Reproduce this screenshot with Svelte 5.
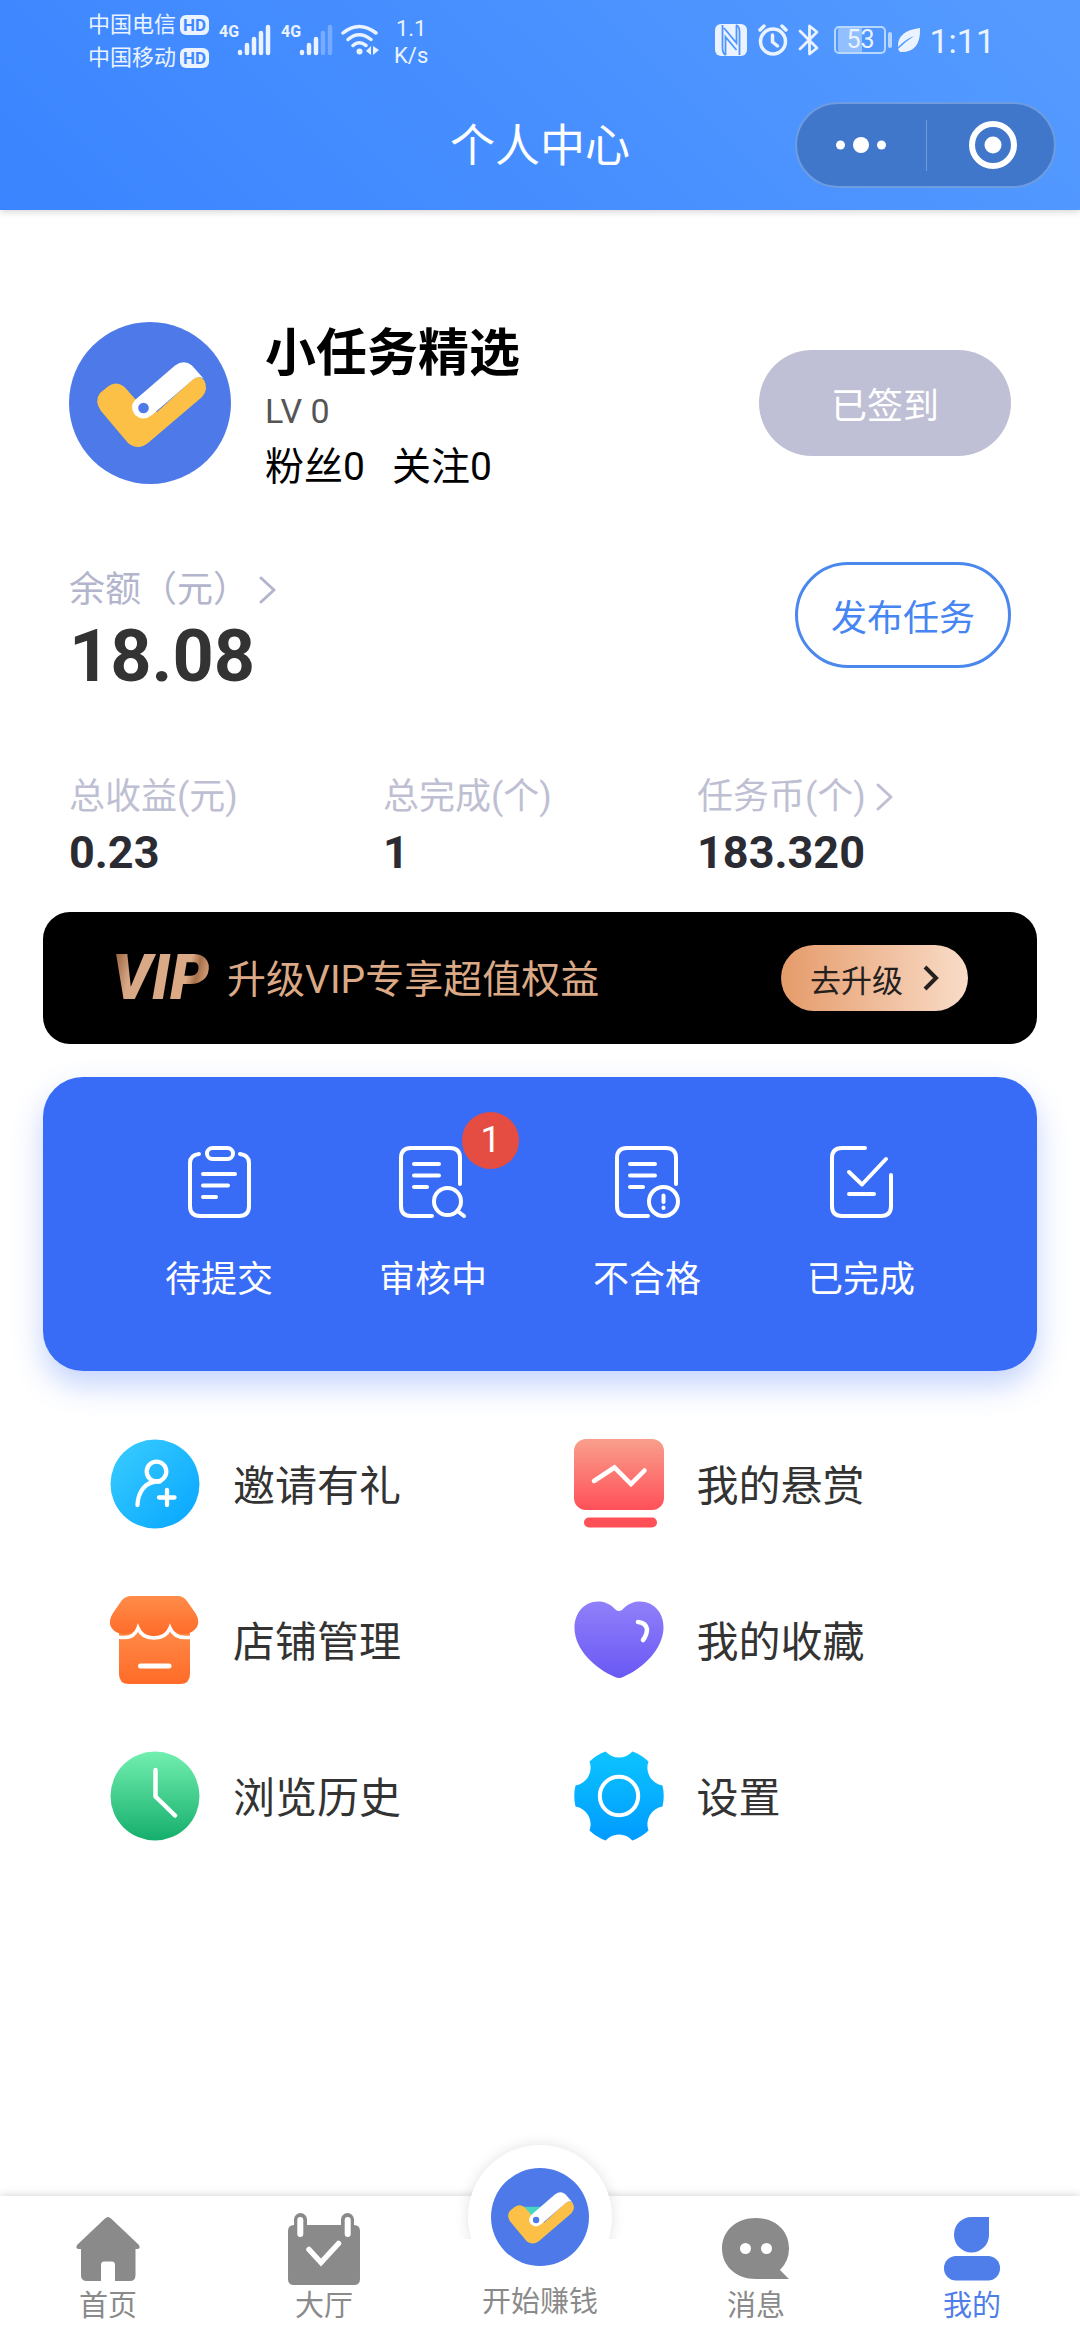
<script>
  const stats = [
    { label: '总收益(元)', value: '0.23' },
    { label: '总完成(个)', value: '1' },
    { label: '任务币(个)', value: '183.320', more: true }
  ];
  const tasks = [
    { id: 'submit', label: '待提交' },
    { id: 'review', label: '审核中', badge: 1 },
    { id: 'failed', label: '不合格' },
    { id: 'done', label: '已完成' }
  ];
  const menu = [
    { id: 'invite', label: '邀请有礼' },
    { id: 'reward', label: '我的悬赏' },
    { id: 'shop', label: '店铺管理' },
    { id: 'heart', label: '我的收藏' },
    { id: 'history', label: '浏览历史' },
    { id: 'settings', label: '设置' }
  ];
  const tabs = [
    { id: 'home', label: '首页' },
    { id: 'hall', label: '大厅' },
    { id: 'earn', label: '开始赚钱' },
    { id: 'message', label: '消息' },
    { id: 'me', label: '我的' }
  ];
  let active = $state('me');
</script>

{#snippet logo(teal)}
  <svg class="logo" viewBox="0 0 162 162" aria-hidden="true">
    <circle cx="81" cy="81" r="81" fill="#4e79e8" />
    {#if teal}<path d="M50 64H90L68 84Z" fill="#46d6c2" />{/if}
    <path d="M31 71L39 64.500Q47.500 58 56 65.500L68 79L88 90L123 58Q130 52 135 58Q140 67 133 75L79 121Q69 129 59 121L32 89Q25 79 31 71Z" fill="#fbc045" />
    <path d="M66 78L106 43.500Q115 37 123 43.500L134.500 56.500Q129 53 124 57.500L83 93Q74 100 66 93Q60 85 66 78Z" fill="#fff" />
    <circle cx="74.500" cy="86" r="5.300" fill="#4e79e8" />
  </svg>
{/snippet}

{#snippet chevron()}
  <svg class="chevron" viewBox="0 0 18 30" aria-hidden="true"><path d="M2 3L15 15L2 27" fill="none" stroke="currentColor" stroke-width="3" stroke-linecap="round" stroke-linejoin="round" /></svg>
{/snippet}

<div class="page">
  <header>
    <div class="status">
      <div class="carriers">
        <div>中国电信<b>HD</b></div>
        <div>中国移动<b>HD</b></div>
      </div>
      <div class="signal"><i>4G</i>
        <svg width="34" height="32" viewBox="0 0 34 32" fill="none" stroke="#eaf3ff" stroke-width="4.500" stroke-linecap="round"><path d="M3 28v1M10 21v8M17 15v14M24 9v20M31 3v26" /></svg>
      </div>
      <div class="signal second"><i>4G</i>
        <svg width="34" height="32" viewBox="0 0 34 32" fill="none" stroke="#eaf3ff" stroke-width="4.500" stroke-linecap="round"><path d="M3 28v1M10 21v8M17 15v14" /><path opacity=".3" d="M24 9v20M31 3v26" /></svg>
      </div>
      <svg class="wifi" width="38" height="32" viewBox="0 0 38 32" fill="none" stroke="#eaf3ff" stroke-width="3.500" stroke-linecap="round">
        <path d="M2 9Q18 -4 35 9M7 15.500Q18 6 30 15.500M12 21.500Q18 16 25 21.500" />
        <circle cx="18.500" cy="27.500" r="3" fill="#eaf3ff" stroke="none" />
        <path d="M30 22v9l-5-4zM32 22v9l6-5z" fill="#eaf3ff" stroke="none" />
      </svg>
      <div class="speed">1.1<br />K/s</div>
      <div class="right">
        <svg class="nfc" width="32" height="32" viewBox="0 0 32 32"><rect width="32" height="32" rx="6" fill="#eaf3ff" /><path d="M7.500 1V24Q7.500 30 11 31M10.500 31V13L21.500 26M24.500 31V8Q24.500 2 21 1M21.500 1V19L9 4" fill="none" stroke="#5096fe" stroke-width="1.800" /></svg>
        <svg class="alarm" width="30" height="32" viewBox="0 0 30 32" fill="none" stroke="#eaf3ff" stroke-width="3.500" stroke-linecap="round"><circle cx="15" cy="17.500" r="12.500" /><path d="M14.500 11v7l5 4M2 6l4-4M28 6l-4-4" /></svg>
        <svg class="bt" width="22" height="32" viewBox="0 0 22 32" fill="none" stroke="#eaf3ff" stroke-width="2.800" stroke-linejoin="round" stroke-linecap="round"><path d="M2 7L19 24L11.500 30V2L19 8L2 25" /></svg>
        <span class="battery">53</span>
        <svg class="leaf" width="24" height="26" viewBox="0 0 24 26"><path d="M23 1Q0 4 1 20Q9 12 17 9Q8 15 1 22L3 25Q24 26 23 1Z" fill="#eaf3ff" /></svg>
        <time>1:11</time>
      </div>
    </div>
    <div class="titlebar">
      <h1>个人中心</h1>
      <div class="capsule">
        <button aria-label="更多"><svg width="52" height="20" viewBox="0 0 52 20" fill="#fff"><circle cx="5.500" cy="10" r="4.500" /><circle cx="26" cy="10" r="8" /><circle cx="46.500" cy="10" r="4.500" /></svg></button>
        <button aria-label="关闭"><svg width="48" height="48" viewBox="0 0 48 48" fill="#fff"><circle cx="24" cy="24" r="21" fill="none" stroke="#fff" stroke-width="6" /><circle cx="24" cy="24" r="8.500" /></svg></button>
      </div>
    </div>
  </header>

  <main>
    <section class="profile">
      <div class="avatar">{@render logo(false)}</div>
      <div class="who">
        <h2>小任务精选</h2>
        <p class="level">LV 0</p>
        <p class="follow"><span>粉丝0</span><span>关注0</span></p>
      </div>
      <button class="signed">已签到</button>
    </section>

    <section class="balance">
      <div>
        <a href="#balance">余额（元）{@render chevron()}</a>
        <strong>18.08</strong>
      </div>
      <button class="publish">发布任务</button>
    </section>

    <dl class="stats">
      {#each stats as s}
        <div>
          <dt>{s.label}{#if s.more}{@render chevron()}{/if}</dt>
          <dd>{s.value}</dd>
        </div>
      {/each}
    </dl>

    <section class="vip">
      <em>VIP</em>
      <span>升级VIP专享超值权益</span>
      <button>去升级<svg width="16" height="26" viewBox="0 0 16 26" fill="none" stroke="#24201e" stroke-width="4"><path d="M2 2L13 13L2 24" /></svg></button>
    </section>

    <section class="tasks">
      {#each tasks as t}
        <button>
          <span class="ticon">
            <svg viewBox="0 0 72 72" fill="none" stroke="#fff" stroke-width="4" stroke-linecap="round" stroke-linejoin="round" aria-hidden="true">
              {#if t.id === 'submit'}
                <path d="M16 8Q7 9 7 17V60Q7 70 17 70H56Q66 70 66 60V17Q66 9 57 8" />
                <rect x="24" y="2" width="26" height="11" rx="5.500" />
                <path d="M20 28H52M20 39.500H45M20 51H33" />
              {:else if t.id === 'review'}
                <path d="M63 38V12Q63 2 53 2H14Q4 2 4 12V60Q4 70 14 70H35" />
                <path d="M17 18H42M17 29.500H42M17 41H30" />
                <circle cx="50.500" cy="55.500" r="13.500" /><path d="M60.500 65L67 70" />
              {:else if t.id === 'failed'}
                <path d="M65 38V12Q65 2 55 2H16Q6 2 6 12V60Q6 70 16 70H37" />
                <path d="M19 18H44M19 29.500H44M19 41H32" />
                <circle cx="52.500" cy="55.500" r="14.500" /><path d="M52.500 49.500V56M52.500 61.500V62" />
              {:else}
                <path d="M40 2H17Q7 2 7 12V60Q7 70 17 70H56Q66 70 66 60V29" />
                <path d="M24 26L37 38.500L61 13M24 48H49" />
              {/if}
            </svg>
            {#if t.badge}<span class="badge">{t.badge}</span>{/if}
          </span>
          {t.label}
        </button>
      {/each}
    </section>

    <nav class="menu">
      {#each menu as m}
        <a href={'#' + m.id}>
          <svg viewBox="0 0 90 90" fill="none" stroke-linecap="round" stroke-linejoin="round" aria-hidden="true">
            {#if m.id === 'invite'}
              <defs><linearGradient id="gi" x1="0" y1="0" x2="1" y2="1"><stop offset=".1" stop-color="#35c9ff" /><stop offset=".9" stop-color="#0ba9ff" /></linearGradient></defs>
              <circle cx="45" cy="45" r="44.500" fill="url(#gi)" />
              <g stroke="#fff" stroke-width="4.300"><circle cx="46.500" cy="32.500" r="9.800" /><path d="M27.500 66C28 53 35 43.500 46 42.500H50M49 58.500H64.500M57 51V66" /></g>
            {:else if m.id === 'reward'}
              <defs><linearGradient id="gr" x1="0" y1="0" x2="0" y2="1"><stop stop-color="#f99f8c" /><stop offset="1" stop-color="#ff5058" /></linearGradient></defs>
              <rect y="0" width="90" height="71" rx="12" fill="url(#gr)" />
              <rect x="10" y="78.500" width="73" height="10" rx="5" fill="#ff5058" />
              <path d="M20 42L40.500 28.500L57 45L70.500 31.500" stroke="#fff" stroke-width="4.500" stroke-linejoin="miter" />
            {:else if m.id === 'shop'}
              <defs><linearGradient id="gs" x1="0" y1="0" x2="0" y2="1"><stop stop-color="#ff8c4a" /><stop offset="1" stop-color="#ff6b28" /></linearGradient></defs>
              <path d="M9 30H80V79Q80 89 70 89H19Q9 89 9 79Z" fill="url(#gs)" />
              <path d="M21 1H68Q73 1 77 6L86 19Q90 26 87 32Q82 39 74 39Q64 39 60 31Q56 41 44 41Q32 41 28 31Q24 39 14 39Q5 39 1 32Q-2 26 3 18L12 5Q16 1 21 1Z" fill="url(#gs)" />
              <path d="M8 42Q24 45 28 33Q32 43 44 43Q56 43 60 33Q65 45 82 42" stroke="#fff" stroke-width="3.500" stroke-linecap="butt" stroke-linejoin="miter" />
              <path d="M30.500 71H59" stroke="#fff" stroke-width="5" />
            {:else if m.id === 'heart'}
              <defs><linearGradient id="gh" x1="0" y1="0" x2="0" y2="1"><stop stop-color="#9080fa" /><stop offset="1" stop-color="#6a58f4" /></linearGradient></defs>
              <path d="M42 15Q45 17 48 15C54 8 61 6.500 66 6.500C80 6.500 90 18 89.500 33C89 55 68 74 49 82Q45 84 41 82C22 74 .5 55 .5 33C.5 18 10 6.500 24 6.500C29 6.500 36 8 42 15Z" fill="url(#gh)" />
              <path d="M64 27Q72 28 73 34Q73 40 69 45" stroke="#fff" stroke-width="4.500" />
            {:else if m.id === 'history'}
              <defs><linearGradient id="gc" x1="0" y1="0" x2="0" y2="1"><stop stop-color="#72efaf" /><stop offset="1" stop-color="#15ae6c" /></linearGradient></defs>
              <circle cx="45" cy="45" r="44.500" fill="url(#gc)" />
              <path d="M45.500 19V45.500L65 64.500" stroke="#fff" stroke-width="4.500" />
            {:else}
              <defs><linearGradient id="gg" x1="0" y1="0" x2="0" y2="1"><stop stop-color="#0cc4ff" /><stop offset="1" stop-color="#009bff" /></linearGradient></defs>
              <path d="M31.600 .5A18 18 0 0 0 58.400 .5A46 46 0 0 1 74.500 10.500A18 18 0 0 0 88.500 34.500A46 46 0 0 1 88.500 55.500A18 18 0 0 0 74.500 79.500A46 46 0 0 1 58.400 89.500A18 18 0 0 0 31.600 89.500A46 46 0 0 1 15.500 79.500A18 18 0 0 0 1.500 55.500A46 46 0 0 1 1.500 34.500A18 18 0 0 0 15.500 10.500A46 46 0 0 1 31.600 .5Z" fill="url(#gg)" />
              <circle cx="45" cy="45" r="19.200" stroke="#fff" stroke-width="4" />
            {/if}
          </svg>
          <span>{m.label}</span>
        </a>
      {/each}
    </nav>
  </main>

  <nav class="tabbar">
    {#each tabs as t}
      <button class:active={active === t.id} class:center={t.id === 'earn'} onclick={() => (active = t.id)}>
        {#if t.id === 'earn'}
          <span class="bump">{@render logo(true)}</span>
        {:else}
          <svg class="tab-icon" viewBox="0 0 72 72" fill="currentColor" aria-hidden="true">
            {#if t.id === 'home'}
              <path d="M33 5.500Q36 2.500 39 5.500L67 32Q69 36 65 36H63.500V62Q63.500 68 58 68H43V52Q43 48.500 40 48.500H32Q29 48.500 29 52V68H15Q9 68 9 62V36H7Q3 36 5 32Z" />
            {:else if t.id === 'hall'}
              <path d="M6 12V6.500a6.500 6.500 0 0 1 13 0V12H53V6.500a6.500 6.500 0 0 1 13 0V12Q72 12 72 18V66Q72 72 66 72H6Q0 72 0 66V18Q0 12 6 12Z" />
              <path d="M12.300 7V21M59.700 7V21" stroke="#fff" stroke-width="6" stroke-linecap="round" />
              <path d="M21 36.500L33 49.500L50.500 30.500" fill="none" stroke="#fff" stroke-width="5.500" stroke-linecap="round" />
            {:else if t.id === 'message'}
              <path d="M36 66C16 66 2 53 2 35.500S16 5 36 5S69 18 69 35.500Q69 48 60 57L69 66Z" />
              <circle cx="25.500" cy="35.500" r="5.500" fill="#fff" /><circle cx="46.500" cy="35.500" r="5.500" fill="#fff" />
            {:else}
              <path d="M53 4V22A17.500 17.500 0 0 1 18 22A17.500 17.500 0 0 1 36 4Z" />
              <rect x="8" y="43" width="56" height="24.500" rx="12" />
            {/if}
          </svg>
        {/if}
        <span class="tab-label">{t.label}</span>
      </button>
    {/each}
  </nav>
</div>

<style>
  :global(body) { margin: 0; background: #fff; }
  .page {
    min-height: 100vh;
    display: flex;
    flex-direction: column;
    font-family: Roboto, "Noto Sans CJK SC", sans-serif;
    color: #333;
  }
  .page :is(h1, h2, p, dl, dd) { margin: 0; font-weight: 400; }
  button { border: 0; padding: 0; background: none; font: inherit; color: inherit; cursor: pointer; }
  a { color: inherit; text-decoration: none; }
  svg { display: block; flex: none; }

  header {
    height: 210px;
    background: linear-gradient(45deg, #3a84ff, #559bff);
    box-shadow: 0 1px 8px rgba(0, 0, 0, .2);
    color: #eaf3ff;
  }
  .status { height: 80px; display: flex; align-items: center; padding: 0 85px 0 88px; }
  .carriers { font-size: 22px; line-height: 33px; padding-top: 2px; }
  .carriers div { display: flex; align-items: center; gap: 4px; }
  .carriers b {
    width: 29px; height: 20px; border-radius: 6px; background: #eaf3ff; color: #3f88ff;
    font-size: 17px; line-height: 20px; text-align: center;
  }
  .signal { display: flex; align-items: flex-start; margin-left: 10px; }
  .signal i { font: 700 16px/16px Roboto, sans-serif; width: 18px; }
  .wifi { margin-left: 8px; }
  .speed { font-size: 22px; line-height: 27px; text-align: center; margin-left: 15px; padding-top: 4px; }
  .right { margin-left: auto; display: flex; align-items: center; }
  .alarm { margin-left: 11px; }
  .bt { margin-left: 10px; }
  .battery {
    position: relative; box-sizing: border-box; width: 52px; height: 28px; margin: 0 11px 0 14px;
    border: 2px solid #b9d6ff; border-radius: 5px; font-size: 25px; line-height: 24px; text-align: center;
    background: linear-gradient(90deg, #92bfff 54%, transparent 54%) content-box; padding: 0 2px;
  }
  .battery::after {
    content: ""; position: absolute; right: -8px; top: 4px; width: 4px; height: 16px; border-radius: 2px; background: #b9d6ff;
  }
  time { font-size: 34px; line-height: 40px; margin-left: 8px; padding-top: 2px; }

  .titlebar { height: 130px; display: grid; grid-template-columns: 1fr auto 1fr; align-items: center; padding: 0 24px; }
  h1 { grid-column: 2; font-size: 45px; line-height: 60px; padding-top: 3px; color: #fff; }
  .page h1 { padding-top: 3px; }
  .capsule {
    justify-self: end; box-sizing: border-box; width: 261px; height: 86px; border: 2px solid #6e9ce0; border-radius: 43px;
    background: #4077ca; display: grid; grid-template-columns: 1fr 1fr; align-items: center;
  }
  .capsule button { height: 51px; display: grid; place-items: center; }
  .capsule button + button { border-left: 1px solid #6f9bdd; padding-left: 6px; }

  main { flex: 1; padding: 102px 43px 0; }
  .profile { display: flex; align-items: center; padding: 0 26px; }
  .avatar { width: 162px; height: 162px; }
  .logo { width: 100%; height: 100%; }
  .who { margin-left: 34px; }
  .page h2 { font-size: 51px; line-height: 80px; padding-top: 2px; font-weight: 700; color: #000; }
  .level { font-size: 34px; line-height: 34px; color: #555; }
  .follow { display: flex; gap: 27px; font-size: 39px; line-height: 54px; padding-top: 12px; color: #000; }
  .signed { margin-left: auto; width: 252px; height: 106px; border-radius: 53px; background: #bfbfd5; color: #fff; font-size: 36px; }

  .balance { display: flex; justify-content: space-between; align-items: flex-start; margin-top: 68px; padding: 0 26px; }
  .balance a { display: flex; align-items: center; font-size: 36px; line-height: 56px; color: #b3b5cc; }
  .balance a .chevron { margin-left: 10px; }
  .balance strong { display: block; font-size: 72px; line-height: 78px; font-weight: 700; }
  .chevron { width: 18px; height: 30px; }
  .publish { box-sizing: border-box; width: 216px; height: 106px; border: 3px solid #4b88ee; border-radius: 53px; color: #4685f2; font-size: 36px; }

  .stats { display: grid; grid-template-columns: repeat(3, 1fr); padding: 0 26px; }
  .page .stats { margin-top: 76px; }
  .stats dt { display: flex; align-items: center; font-size: 36px; line-height: 50px; color: #bfbfd3; }
  .stats .chevron { margin-left: 10px; }
  .page dd { font-size: 45px; line-height: 62px; font-weight: 700; color: #2a2b33; }

  .vip { height: 132px; margin-top: 28px; border-radius: 27px; background: #000; display: flex; align-items: center; padding: 0 69px; }
  .vip em {
    font-size: 62px; line-height: 66px; font-weight: 900; padding-right: 4px;
    background: linear-gradient(105deg, #96603c 4%, #d9a987 22%, #dba984 70%, #a8714b 78%, #dba984 90%);
    background-clip: text; color: transparent;
  }
  .vip span { margin-left: 14px; padding-top: 4px; font-size: 39px; line-height: 60px; color: #dba985; }
  .vip button {
    margin-left: auto; width: 187px; height: 66px; border-radius: 33px; background: linear-gradient(90deg, #e59b6a, #f9dcc8);
    color: #24201e; font-size: 31px; display: flex; align-items: center; justify-content: center; gap: 20px;
  }

  .tasks {
    display: grid; grid-template-columns: repeat(4, 1fr); margin-top: 33px; padding: 69px 69px 67px;
    border-radius: 40px; background: #386cf6; box-shadow: 0 14px 30px rgba(56, 108, 246, .3); color: #fff;
  }
  .tasks button { display: flex; flex-direction: column; align-items: center; gap: 38px; font-size: 36px; line-height: 48px; }
  .ticon { position: relative; width: 72px; height: 72px; }
  .badge {
    position: absolute; left: 65px; top: -34px; width: 57px; height: 57px; border-radius: 50%;
    background: #e54d42; font-size: 36px; line-height: 57px; text-align: center;
  }

  .menu { display: grid; grid-template-columns: 1fr 1fr; margin-top: 35px; padding-left: 67px; }
  .menu a { height: 156px; display: flex; align-items: center; gap: 33px; font-size: 42px; line-height: 60px; }
  .menu span { padding-top: 5px; }
  .menu svg { width: 90px; height: 90px; }

  .tabbar {
    display: grid; grid-template-columns: repeat(5, 1fr); height: 144px; background: #fff;
    box-shadow: 0 -1px 8px rgba(0, 0, 0, .16); color: #8a8a8a;
  }
  .tabbar button { position: relative; display: flex; flex-direction: column; align-items: center; padding-top: 17px; }
  .tab-icon { width: 72px; height: 72px; }
  .tab-label { font-size: 29px; line-height: 42px; position: relative; }
  .tabbar .active { color: #4f7de9; }
  .tabbar .center { justify-content: flex-end; padding: 0 0 17px; }
  .bump {
    position: absolute; left: 50%; top: -51px; margin-left: -72px; box-sizing: border-box; width: 144px; height: 144px; padding: 23px;
    border-radius: 50%; background: #fff;
  }
  .bump::before {
    content: ""; position: absolute; inset: 0; border-radius: 50%;
    box-shadow: 0 0 14px rgba(0, 0, 0, .12); clip-path: inset(-20px -20px 50px);
  }
  .bump .logo { width: 98px; height: 98px; }
</style>
